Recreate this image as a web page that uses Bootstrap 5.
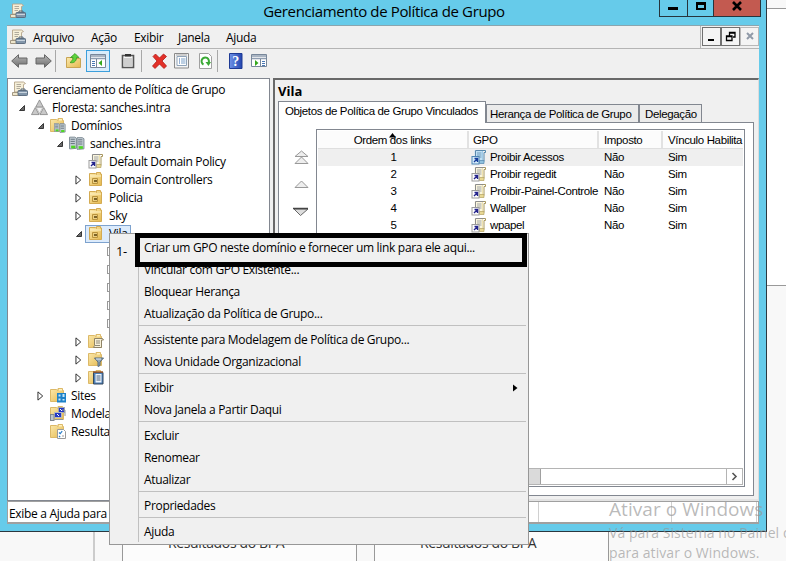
<!DOCTYPE html>
<html lang="pt-BR">
<head>
<meta charset="utf-8">
<title>Gerenciamento de Política de Grupo</title>
<link href="https://cdn.jsdelivr.net/npm/bootstrap@5.3.0/dist/css/bootstrap.min.css" rel="stylesheet">
<style>
body{width:786px;height:561px;overflow:hidden;background:#f8f8f8;color:#000;font:12px/18px "Open Sans","Noto Sans",sans-serif;letter-spacing:-.32px;white-space:nowrap}
svg{display:block;flex:none}
.desk{width:786px;height:561px}
.bg-top{right:0;top:0;width:30px;height:286px;background:#fff;border-bottom:1px solid #999}
.bg-top i{display:block;height:9px;background:#f8f8f8;border-bottom:1px solid #999}
.bg-cards{left:93px;top:532px;width:516px;height:29px;border-left:2px solid #ccc;padding-left:27px;gap:17px}
.bpa{width:235px;border:solid #999;border-width:0 1px;background:#fcfcfc;padding:2px 0 0 45px;font-size:14px;color:#333;letter-spacing:-.35px}
.win{left:0;top:0;width:767px;height:532px;background:#66cbea;border:solid #2b3840;border-width:0 1px 1px 0;padding:0 7px 7px 7px;display:flex;flex-direction:column}
.titlebar{height:25px;padding-left:3px}
.titlebar .cap{font-size:15px;letter-spacing:-.36px;line-height:22px;text-align:center;padding-left:83px}
.wbtns{height:17px;border:1px solid #26343c;border-top:0;margin-right:-2px}
.wbtns span{display:flex;justify-content:center;border-left:1px solid #26343c;height:16px}
.wbtns span:first-child{border:0}
.red{background:#c35a50}
.menubar{height:24px;background:#f0f0f0;border-top:1px solid #8ba5ae;border-bottom:1px solid #b4b4b4;padding-left:3px}
.menubar>span{padding-top:1px}
.mdi{height:22px;border-left:1px solid #b4b4b4;padding:1px 0 0 1px}
.mdi span{width:19px;height:19px;border:1px solid #707070;display:flex;align-items:center;justify-content:center;background:#f4f4f4}
.mdi span:last-child{border-color:#b8b8b8}
.tools{height:29px;background:#f0f0f0;padding:0 0 5px 4px}
.tools>*{margin-right:7px}
.tools .vsep{width:1px;height:22px;background:#a8a8a8}
.tools .on{width:24px;height:22px;border:1px solid #3c9fdc;background:#d9ecfb;display:flex;align-items:center;justify-content:center}
.panes{height:423px;background:#f0f0f0}
.tree{width:263px;border:1px solid #828790;background:#fff;padding-top:1px;overflow:hidden}
.trow{height:18px;padding-top:2px}
.slot{width:13px;flex:none}
.t0{padding-left:4px}.t1{padding-left:10px}.t2{padding-left:29px}.t3{padding-left:48px}.t4{padding-left:67px}.t5{padding-left:86px}
.trow .ic{margin:0 5px 2px 0}
.trow .last{margin-bottom:2px}
.pick{height:18px;background:#dcebfc;border:1px solid #7da2ce;padding:0 2px 0 2px;margin:0 0 0 -3px}
.stub{width:14px;height:9px;border:1px solid #999;margin-bottom:2px}
.detail{margin-left:3px;width:486px;border:solid #696969;border-width:2px 1px 0 2px;border-right-color:#dcdcdc;border-bottom:2px solid #e3e3e3;padding:2px 0 0 3px}
.win32{font-family:"Liberation Sans",Arial,sans-serif;font-size:11.5px;letter-spacing:-.36px}
.vila{font-size:13px;font-weight:700;line-height:18px;height:19px;letter-spacing:0}
.tabset{height:21px;position:relative;z-index:1}
.tab32{border:1px solid #828790;border-bottom:0;height:18px;line-height:18px;background:#ebebeb;padding:0 3px}
.tab32.cur{background:#fff;height:22px;margin-bottom:-1px;padding:0 6px;line-height:19px;width:208px}
.tabbody{width:476px;height:374px;border:1px solid #828790;background:#fff;padding-top:6px}
.arrows{width:37px;padding:20px 0 0 14px}
.grid32{width:429px;height:358px;border:1px solid #828790;padding:1px;overflow:hidden}
.lrow{height:17px;line-height:17px}
.lhead{height:18px;line-height:18px;background:#fcfcfc;border-bottom:1px solid #dfdfdf}
.lhead .c{border-right:2px solid #e2e2e2}
.c{flex:none;overflow:hidden}
.c1{width:151px;text-align:center}.c2{width:130px;padding-left:4px}.c3{width:64px;padding-left:5px}.c4{width:80px;padding-left:5px}
.lrow .c2{padding-left:2px;gap:3px}
.selrow{background:#efefef}
.sbar{height:17px;border:1px solid #b4b4b4;width:425px;background:#fff}
.thumb{width:222px;background:#dadada;border-right:1px solid #a0a0a0}
.sbtn{width:16px;border-left:1px solid #b4b4b4}
.status{height:23px;background:#fff;border:1px solid #a0a0a0;border-bottom-width:2px;border-left:1px solid #a0a0a0}
.status i{width:1px;height:20px;background:#d0d0d0}
.s1{width:530px;padding:3px 0 0 1px}
.ctx{left:109px;top:233px;width:420px;height:312px;background:#f0f0f0;border:1px solid #979797;padding:2px}
.ctx .gut{width:27px;border-right:1px solid #c0c0c0;font-size:13px;line-height:34px;padding-left:4px;flex:none;margin-top:-2px}
.mi{height:22px;line-height:22px;padding:1px 0 0 5px}
.ms{height:4px;padding-top:1px}
.ms::before{content:"";display:block;height:1px;background:#c0c0c0}
.mark5{left:135px;top:233px;width:392px;height:34px;border:5px solid #000}
.wm{left:609px;top:495px;color:#969696a8;letter-spacing:.06px}
.wm .a{font-size:19px;line-height:28px}
.wm .b{font-size:14px;line-height:20px}
</style>
<script src="https://cdn.jsdelivr.net/npm/bootstrap@5.3.0/dist/js/bootstrap.bundle.min.js"></script>
</head>
<body>
<svg width="0" height="0" class="position-absolute">
<defs>
<linearGradient id="gf" x1="0" y1="0" x2="1" y2="1"><stop offset="0" stop-color="#fbe9ad"/><stop offset="1" stop-color="#e5b94f"/></linearGradient>
<linearGradient id="gg" x1="0" y1="0" x2="0" y2="1"><stop offset="0" stop-color="#b8b8b8"/><stop offset="1" stop-color="#6c6c6c"/></linearGradient>
<linearGradient id="gb" x1="0" y1="0" x2="1" y2="0"><stop offset="0" stop-color="#6f92e8"/><stop offset="1" stop-color="#2345ae"/></linearGradient>
<symbol id="scroll" viewBox="0 0 16 16"><path d="M2.500 1h9l2 1.500-2 1V11H2.500z" fill="#f6efd8" stroke="#b5a58a" stroke-width=".9"/><path d="M4.500 3.500H9M4.500 5.500H9M4.500 7.500H8" stroke="#b0aa9c"/><path d="M.5 11.500h8v3h-8z" fill="#eee6cc" stroke="#9a8f78" stroke-width=".9"/><rect x="6" y="9.500" width="9.500" height="5" rx=".8" fill="#8296aa" stroke="#55677a" stroke-width=".9"/><path d="M9 9.500V8h4v1.500" fill="none" stroke="#55677a"/><path d="M6.500 11.500h8.500" stroke="#c9d4de"/></symbol>
<symbol id="folder" viewBox="0 0 16 16"><path d="M.5 2.500h6l1.500 1V1.500h4.500v2h1V14.500H.5z" fill="url(#gf)" stroke="#dcb968"/><path d="M9 2h3v1.500H9z" fill="#fff1bd"/></symbol>
<symbol id="ou" viewBox="0 0 16 16"><path d="M1.500 2.500h6l1 1V1.500h4v1.500h1V14.500h-12z" fill="url(#gf)" stroke="#d4ab52"/><path d="M2 5h11" stroke="#fff2c4"/><path d="M4.500 7.500h5v5h-5z" fill="#ecd083" stroke="#b8923c"/><rect x="6" y="9" width="3" height="2" fill="#7c6428"/></symbol>
<symbol id="srv" viewBox="0 0 8 12"><path d="M.5 .5h5l1.500 1V11l-5 .5H.5z" fill="#c3cdd4" stroke="#7c8993" stroke-width=".9"/><path d="M1.500 2.500h4M1.500 4.500h4M1.500 6.500h4" stroke="#67757f" stroke-width=".9"/><rect x="2" y="8.500" width="4" height="2.500" fill="#4fd624"/></symbol>
<symbol id="doms" viewBox="0 0 16 16"><use href="#folder"/><use href="#srv" x="4" y="6" width="6" height="9"/><use href="#srv" x="9.500" y="6" width="6.500" height="10"/></symbol>
<symbol id="dom" viewBox="0 0 16 16"><use href="#srv" x="0" y="1" width="8.500" height="14"/><use href="#srv" x="7.500" y="1" width="8.500" height="15"/></symbol>
<symbol id="forest" viewBox="0 0 18 18"><path d="M9 1l4 7.500H5zM4.500 9l4 7.500H.5zM13.500 9l4 7.500h-8z" fill="#c9c9c9" stroke="#7f7f7f" stroke-width=".8"/><path d="M5.500 9h7L9 15.500z" fill="#f1f1f1" stroke="#999" stroke-width=".6"/></symbol>
<symbol id="gpo" viewBox="0 0 16 16"><path d="M3.500 1.500H12v10.500H4z" fill="#faf5dc"/><path d="M4.500 8V1.500h8.500" fill="none" stroke="#8d8d8d"/><path d="M11.500 2v10" stroke="#efe3b0"/><path d="M12.500 1.500h2v2h-1.500v9" fill="none" stroke="#a8975c"/><path d="M8.500 11.500h4.500v3H8.500z" fill="#e8d894" stroke="#b3a262" stroke-width=".7"/><path d="M6 4h4.500M6 6h4.500M8 8h2.500" stroke="#a0a4a8"/><rect x="1" y="7.500" width="7" height="7.500" fill="#fff" stroke="#9b9b9b"/><path d="M3 13l3-3M3.500 9.500h3V13" stroke="#23238c" stroke-width="1.400" fill="none"/></symbol>
<symbol id="gpob" viewBox="0 0 16 16"><path d="M3.500 1.500H12v10.500H4z" fill="#bfe0f4"/><path d="M4.500 8V1.500h8.500" fill="none" stroke="#5b88ac"/><path d="M11.500 2v10" stroke="#9fcbe8"/><path d="M12.500 1.500h2v2h-1.500v9" fill="none" stroke="#5287ad"/><path d="M8.500 11.500h4.500v3H8.500z" fill="#8fc1df" stroke="#5287ad" stroke-width=".7"/><path d="M6 4h4.500M6 6h4.500M8 8h2.500" stroke="#6f9abc"/><rect x="1" y="7.500" width="7" height="7.500" fill="#d6ecfa" stroke="#4f86b4"/><path d="M3 13l3-3M3.500 9.500h3V13" stroke="#143c9c" stroke-width="1.400" fill="none"/></symbol>
<symbol id="fscroll" viewBox="0 0 16 16"><use href="#folder"/><path d="M6.500 5.500h8l1 1.500h-2v7.500h-8l1-2z" fill="#f7f0d8" stroke="#8f8467"/><path d="M8 8h4M8 10h4M7 12.500h5" stroke="#8f8a7a"/></symbol>
<symbol id="ffilter" viewBox="0 0 16 16"><use href="#folder"/><path d="M6.500 7h9l-3.500 4v3.500l-2 1V11z" fill="#8ea6ba" stroke="#566a7c"/><path d="M8 8h5" stroke="#dfe9f2"/></symbol>
<symbol id="fgpo" viewBox="0 0 16 16"><use href="#folder"/><path d="M5.500 3.500h9.500v11.500h-9.500z" fill="#4d7fb5" stroke="#34495e"/><path d="M7.500 5h6v8.500h-6z" fill="#eef5fc"/><path d="M8.500 7h4M8.500 9h4M8.500 11h4" stroke="#49617c"/><path d="M5 3h10" stroke="#9b5a2c" stroke-width="1.500"/></symbol>
<symbol id="sites" viewBox="0 0 16 16"><use href="#folder"/><rect x="7" y="6" width="9" height="9.500" fill="#1e82c8"/><path d="M8.500 7.500h2v2h-2zM12.500 7h2v3h-2zM8.500 11.500h2v2h-2zM12.500 12h2v1.500h-2z" fill="#c6e8fb"/></symbol>
<symbol id="model" viewBox="0 0 16 16"><use href="#folder"/><rect x="8.500" y="2.500" width="6" height="5" fill="#2438c4" stroke="#a4a9b0"/><rect x="4.500" y="7.500" width="7" height="5" fill="#2438c4" stroke="#b5b9be"/><path d="M5 14.500h8M12 5l3 0v6" stroke="#8e949c" fill="none"/><rect x=".5" y="9.500" width="3.500" height="6" fill="#bfc6cb" stroke="#7e868e"/><path d="M7 9l2 2M10 4l2 2" stroke="#fff"/></symbol>
<symbol id="result" viewBox="0 0 16 16"><use href="#folder"/><path d="M7.500 6.500h6l2 2v7h-8z" fill="#fff" stroke="#9a9a9a"/><path d="M9 9.500l1.200 1.200 2-2.500M9 13l1.200 1.200" stroke="#2b7fc9" fill="none" stroke-width="1.200"/><path d="M12 13h2" stroke="#999"/></symbol>
<symbol id="open" viewBox="0 0 8 8"><path d="M6.500 1.500v5h-5z" fill="#6a6a6a" stroke="#2a2a2a" stroke-width=".9"/></symbol>
<symbol id="shut" viewBox="0 0 6 9"><path d="M.7 .8v7.400l4.300-3.700z" fill="#fff" stroke="#333" stroke-width=".9"/></symbol>
</defs></svg>

<div class="desk position-relative overflow-hidden">
  <div class="bg-top position-absolute"><i></i></div>
  <div class="bg-cards position-absolute d-flex"><div class="bpa">Resultados do BPA</div><div class="bpa">Resultados do BPA</div></div>

  <div class="win position-absolute">
    <div class="titlebar d-flex align-items-start">
      <svg style="margin-top:3px" width="16" height="16"><use href="#scroll"/></svg>
      <div class="cap flex-grow-1">Gerenciamento de Política de Grupo</div>
      <div class="wbtns d-flex">
        <span style="width:27px"><svg width="27" height="16"><path d="M8 8.500h10" stroke="#000" stroke-width="3"/></svg></span>
        <span style="width:26px"><svg width="25" height="16"><path d="M9 3h8v6H9z" fill="none" stroke="#000" stroke-width="2"/><path d="M8 3.500h10" stroke="#000" stroke-width="3"/></svg></span>
        <span class="red" style="width:47px"><svg width="46" height="16"><path d="M19 2l8 8M27 2l-8 8" stroke="#000" stroke-width="2.600"/></svg></span>
      </div>
    </div>
    <div class="menubar d-flex align-items-center">
      <svg width="16" height="16"><use href="#scroll"/></svg>
      <span style="margin-left:7px;width:58px">Arquivo</span><span style="width:43px">Ação</span><span style="width:44px">Exibir</span><span style="width:48px">Janela</span><span>Ajuda</span>
      <div class="mdi d-flex ms-auto"><span><svg width="13" height="13"><path d="M3 10h6" stroke="#000" stroke-width="2"/></svg></span><span><svg width="13" height="13"><path d="M5.500 6V2.500h5.500V7H9M5 3h6" fill="none" stroke="#000" stroke-width="1.300"/><path d="M2.500 6h5.500v4.500H2.500zM2 6.500h6" fill="#f4f4f4" stroke="#000" stroke-width="1.300"/></svg></span><span><svg width="13" height="13"><path d="M4 3l6 6M10 3L4 9" stroke="#909aa8" stroke-width="2"/></svg></span></div>
    </div>
    <div class="tools d-flex align-items-center">
      <svg width="17" height="16"><path d="M.7 8L7.500 1.700V5H16v6H7.500v3.300z" fill="url(#gg)" stroke="#666"/></svg>
      <svg width="17" height="16"><path d="M16.300 8L9.500 1.700V5H1v6h8.500v3.300z" fill="url(#gg)" stroke="#666"/></svg>
      <div class="vsep" style="margin:0 10px 0 -4px"></div>
      <svg width="16" height="16" style="margin-right:4px"><path d="M.5 4.500h5l1.500 1h7.500v9H.5z" fill="url(#gf)" stroke="#c8a455"/><path d="M4 9.500c1-1 3-2 3-5H4.500L9 .5l4 4h-2.500c0 4-3 6-6.500 5z" fill="#5fd43c" stroke="#2c8f17" stroke-width=".7"/></svg>
      <div class="on"><svg width="17" height="14"><path d="M.5 .5h15v13H.5z" fill="#fff" stroke="#78879a"/><path d="M1 2h14M1 4.500h14" stroke="#8f9db0" stroke-width="1.500"/><path d="M6.500 5v8" stroke="#78879a"/><path d="M2 7.500h3M2 9.500h3M2 11.500h3" stroke="#4a78b4"/><path d="M12 6v6L8.500 9z" fill="#35a81c"/></svg></div>
      <svg width="14" height="16" style="margin:0 7px 0 4px"><path d="M1.500 2.500h11v12h-11z" fill="#f4f4f4" stroke="#555" stroke-width="1.600"/><path d="M4 1h6v2.500H4z" fill="#333"/><path d="M3 6h8M3 8h8M3 10h8M3 12h8" stroke="#aaa"/></svg>
      <div class="vsep" style="margin:0 9px 0 -1px"></div>
      <svg width="17" height="17" style="margin-right:6px"><path d="M2 3.500L4.500 1l4 4 4-4L15.500 3.500l-4.500 4.500 4.500 5-2.500 2.500-4.500-4.500-4.500 4.500L1.500 13l4.500-5z" fill="#e33028" stroke="#b01a16" stroke-width=".8"/></svg>
      <svg width="16" height="16"><path d="M.5 .5h14v14.500H.5z" fill="#f4f4f4" stroke="#8a8a8a"/><path d="M3 3.500h9.500v9H3z" fill="#fff" stroke="#8fa3b8"/><path d="M5 6h1M5 8h1M5 10h1" stroke="#2c62a8"/><path d="M7 6h4.500M7 8h4.500M7 10h4.500" stroke="#7aa0c8"/><path d="M2 2h11" stroke="#aaa"/></svg>
      <svg width="15" height="16" style="margin-left:1px"><path d="M1.500 .5h9l3 3v12h-12z" fill="#fff" stroke="#a0a0a0"/><path d="M5.500 11.500A3.700 3.700 0 1 1 10.500 10" fill="none" stroke="#3aa935" stroke-width="2"/><path d="M7.500 9h5.500l-2.500 4z" fill="#3aa935"/></svg>
      <div class="vsep" style="margin:0 11px 0 -3px"></div>
      <svg width="14" height="16" style="margin-right:8px"><path d="M.5 .5h12.500v15H.5z" fill="url(#gb)" stroke="#1e3a94"/><text x="3.200" y="13" font-family="Liberation Serif,serif" font-size="14" font-weight="700" fill="#fff">?</text></svg>
      <svg width="17" height="14"><path d="M.5 .5h15v12H.5z" fill="#fff" stroke="#78879a"/><path d="M1 2h14M1 4.500h14" stroke="#8f9db0" stroke-width="1.500"/><path d="M9.500 5v8" stroke="#78879a"/><path d="M11 7.500h3M11 9.500h3M11 11.500h3" stroke="#4a78b4"/><path d="M4 6v6l3.500-3z" fill="#35a81c"/></svg>
    </div>

    <div class="panes d-flex">
      <div class="tree">
        <div class="trow t0 d-flex align-items-center"><svg class="ic" width="16" height="16"><use href="#scroll"/></svg>Gerenciamento de Política de Grupo</div>
        <div class="trow t1 d-flex align-items-center"><div class="slot"><svg width="8" height="8"><use href="#open"/></svg></div><svg class="ic" width="17" height="17" style="margin-right:4px"><use href="#forest"/></svg>Floresta: sanches.intra</div>
        <div class="trow t2 d-flex align-items-center"><div class="slot"><svg width="8" height="8"><use href="#open"/></svg></div><svg class="ic" width="16" height="16"><use href="#doms"/></svg>Domínios</div>
        <div class="trow t3 d-flex align-items-center"><div class="slot"><svg width="8" height="8"><use href="#open"/></svg></div><svg class="ic" width="16" height="16"><use href="#dom"/></svg>sanches.intra</div>
        <div class="trow t4 d-flex align-items-center"><div class="slot"></div><svg class="ic" width="16" height="16"><use href="#gpo"/></svg>Default Domain Policy</div>
        <div class="trow t4 d-flex align-items-center"><div class="slot"><svg width="7" height="10"><use href="#shut"/></svg></div><svg class="ic" width="16" height="16"><use href="#ou"/></svg>Domain Controllers</div>
        <div class="trow t4 d-flex align-items-center"><div class="slot"><svg width="7" height="10"><use href="#shut"/></svg></div><svg class="ic" width="16" height="16"><use href="#ou"/></svg>Policia</div>
        <div class="trow t4 d-flex align-items-center"><div class="slot"><svg width="7" height="10"><use href="#shut"/></svg></div><svg class="ic" width="16" height="16"><use href="#ou"/></svg>Sky</div>
        <div class="trow t4 d-flex align-items-center"><div class="slot"><svg width="8" height="8"><use href="#open"/></svg></div><div class="pick d-flex align-items-center"><svg class="ic" width="16" height="16"><use href="#ou"/></svg>Vila</div></div>
        <div class="trow t5 d-flex align-items-center"><div class="slot"></div><div class="stub"></div></div>
        <div class="trow t5 d-flex align-items-center"><div class="slot"></div><div class="stub"></div></div>
        <div class="trow t5 d-flex align-items-center"><div class="slot"></div><div class="stub"></div></div>
        <div class="trow t5 d-flex align-items-center"><div class="slot"></div><div class="stub"></div></div>
        <div class="trow t5 d-flex align-items-center"><div class="slot"></div><div class="stub"></div></div>
        <div class="trow t4 d-flex align-items-center"><div class="slot"><svg width="7" height="10"><use href="#shut"/></svg></div><svg class="last" width="16" height="16"><use href="#fscroll"/></svg></div>
        <div class="trow t4 d-flex align-items-center"><div class="slot"><svg width="7" height="10"><use href="#shut"/></svg></div><svg class="last" width="16" height="16"><use href="#ffilter"/></svg></div>
        <div class="trow t4 d-flex align-items-center"><div class="slot"><svg width="7" height="10"><use href="#shut"/></svg></div><svg class="last" width="16" height="16"><use href="#fgpo"/></svg></div>
        <div class="trow t2 d-flex align-items-center"><div class="slot"><svg width="7" height="10"><use href="#shut"/></svg></div><svg class="ic" width="16" height="16"><use href="#sites"/></svg>Sites</div>
        <div class="trow t2 d-flex align-items-center"><div class="slot"></div><svg class="ic" width="16" height="16"><use href="#model"/></svg>Modelagem</div>
        <div class="trow t2 d-flex align-items-center"><div class="slot"></div><svg class="ic" width="16" height="16"><use href="#result"/></svg>Resultados</div>
      </div>
      <div class="detail">
        <div class="vila">Vila</div>
        <div class="win32">
          <div class="tabset d-flex align-items-end"><div class="tab32 cur">Objetos de Política de Grupo Vinculados</div><div class="tab32" style="width:153px">Herança de Política de Grupo</div><div class="tab32" style="width:63px;padding-left:5px">Delegação</div></div>
          <div class="tabbody d-flex">
            <div class="arrows"><svg width="17" height="76"><g stroke="#999" fill="#eee"><path d="M2 7.500h13L8.500 2z"/><path d="M2 14.500h13L8.500 8z"/><path d="M2 38.500h13L8.500 32z"/></g><path d="M1 60h14L7.500 66.500z" fill="#ddd" stroke="#666"/><path d="M0 59.500h15" stroke="#444" stroke-width="1.500"/></svg></div>
            <div class="grid32 d-flex flex-column">
              <div class="lhead d-flex position-relative"><div class="c c1">Ordem dos links</div><div class="c c2">GPO</div><div class="c c3">Imposto</div><div class="c c4 border-0">Vínculo Habilita</div><svg class="position-absolute" style="left:71px;top:2px" width="8" height="5"><path d="M0 4.500h7L3.500 0z"/></svg></div>
              <div class="lrow selrow d-flex"><div class="c c1">1</div><div class="c c2 d-flex"><svg width="16" height="16"><use href="#gpob"/></svg>Proibir Acessos</div><div class="c c3">Não</div><div class="c c4">Sim</div></div>
              <div class="lrow d-flex"><div class="c c1">2</div><div class="c c2 d-flex"><svg width="16" height="16"><use href="#gpo"/></svg>Proibir regedit</div><div class="c c3">Não</div><div class="c c4">Sim</div></div>
              <div class="lrow d-flex"><div class="c c1">3</div><div class="c c2 d-flex"><svg width="16" height="16"><use href="#gpo"/></svg>Proibir-Painel-Controle</div><div class="c c3">Não</div><div class="c c4">Sim</div></div>
              <div class="lrow d-flex"><div class="c c1">4</div><div class="c c2 d-flex"><svg width="16" height="16"><use href="#gpo"/></svg>Wallper</div><div class="c c3">Não</div><div class="c c4">Sim</div></div>
              <div class="lrow d-flex"><div class="c c1">5</div><div class="c c2 d-flex"><svg width="16" height="16"><use href="#gpo"/></svg>wpapel</div><div class="c c3">Não</div><div class="c c4">Sim</div></div>
              <div class="sbar mt-auto d-flex"><div class="thumb"></div><div class="sbtn ms-auto"><svg width="15" height="15"><path d="M5.500 4l3.500 3.500L5.500 11" fill="none" stroke="#555" stroke-width="1.600"/></svg></div></div>
            </div>
          </div>
        </div>
      </div>
    </div>
    <div class="status d-flex align-items-center"><div class="s1">Exibe a Ajuda para a</div><i></i><i style="margin-left:132px"></i><i style="margin-left:84px"></i></div>
  </div>

  <div class="ctx position-absolute d-flex">
    <div class="gut">1-</div>
    <div class="flex-grow-1">
      <div class="mi">Criar um GPO neste domínio e fornecer um link para ele aqui...</div>
      <div class="mi">Vincular com GPO Existente...</div>
      <div class="mi">Bloquear Herança</div>
      <div class="mi">Atualização da Política de Grupo...</div>
      <div class="ms"></div>
      <div class="mi">Assistente para Modelagem de Política de Grupo...</div>
      <div class="mi">Nova Unidade Organizacional</div>
      <div class="ms"></div>
      <div class="mi d-flex align-items-center justify-content-between">Exibir<svg width="13" height="8"><path d="M0 .5v7L4.500 4z"/></svg></div>
      <div class="mi">Nova Janela a Partir Daqui</div>
      <div class="ms"></div>
      <div class="mi">Excluir</div>
      <div class="mi">Renomear</div>
      <div class="mi">Atualizar</div>
      <div class="ms"></div>
      <div class="mi">Propriedades</div>
      <div class="ms"></div>
      <div class="mi">Ajuda</div>
    </div>
  </div>
  <div class="mark5 position-absolute"></div>
  <div class="wm position-absolute"><div class="a">Ativar o Windows</div><div class="b">Vá para Sistema no Painel de Controle</div><div class="b">para ativar o Windows.</div></div>
</div>
</body>
</html>
